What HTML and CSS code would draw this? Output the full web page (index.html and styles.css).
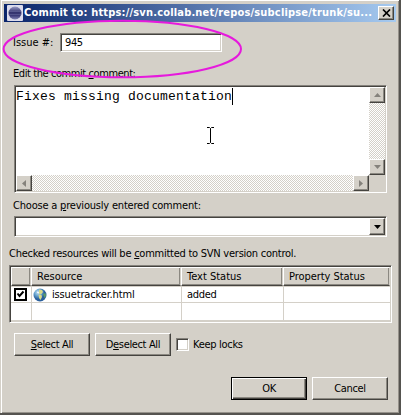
FILE: index.html
```html
<!DOCTYPE html>
<html lang="en">
<head>
<meta charset="utf-8">
<title>Commit</title>
<link rel="stylesheet" href="styles.css">
</head>
<body>
<main class="window">
  <header class="titlebar">
    <svg class="logo" width="16" height="16" viewBox="0 0 16 16"><defs><linearGradient id="orb" x2="0" y2="1"><stop stop-color="#9a9cc6"/><stop offset=".45" stop-color="#34336e"/><stop offset=".7" stop-color="#3c3b78"/><stop offset="1" stop-color="#8384b5"/></linearGradient></defs><rect width="16" height="16" rx="1" fill="#dcdcec"/><circle cx="8" cy="8" r="6.500" fill="url(#orb)"/><path d="M2 6.500h12M1.500 9.500h13" stroke="#6d6fa3" stroke-width=".5"/></svg>
    <h1 class="title">Commit to: https://svn.collab.net/repos/subclipse/trunk/su...</h1>
    <button class="close raised"><svg width="9" height="8" viewBox="0 0 9 8"><path d="M1 .5l7 7M8 .5l-7 7" stroke="#000" stroke-width="1.7"/></svg></button>
  </header>
  <div class="issue"><label class="t-issue">Issue #:</label><div class="field sunken">945</div></div>
  <div class="label t-edit">Edit the commit <u>c</u>omment:</div>
  <div class="editor sunken">
    <div class="text"><span class="typed">Fixes missing documentation</span><i class="caret"></i>
      <svg class="ibeam" width="9" height="17" viewBox="0 0 9 17"><path d="M1 .5h2.500l1 1 1-1H8M4.500 1.500v14M1 16.500h2.500l1-1 1 1H8" fill="none" stroke="#000"/></svg>
    </div>
    <div class="vbar track">
      <span class="sb raised"><svg width="7" height="4"><path d="M0 4L3.500 0L7 4z"/></svg></span>
      <span class="sb raised"><svg width="7" height="4"><path d="M0 0h7L3.500 4z"/></svg></span>
    </div>
    <div class="hbar track">
      <span class="sb raised"><svg width="4" height="7"><path d="M4 0v7L0 3.500z"/></svg></span>
      <span class="sb raised"><svg width="4" height="7"><path d="M0 0v7L4 3.500z"/></svg></span>
    </div>
    <div class="corner"></div>
  </div>
  <div class="label t-choose">Choose a <u>p</u>reviously entered comment:</div>
  <div class="combo sunken"><span class="sb raised dark"><svg width="7" height="4"><path d="M0 0h7L3.500 4z"/></svg></span></div>
  <div class="label t-checked">Checked resources will be <u>c</u>ommitted to SVN version control.</div>
  <div class="table sunken">
    <div class="row head"><span class="raised"></span><span class="raised t-res">Resource</span><span class="raised t-text">Text Status</span><span class="raised t-prop">Property Status</span></div>
    <div class="row first">
      <span class="check"><svg width="13" height="13" viewBox="0 0 13 13"><rect x="1" y="1" width="11" height="11" fill="#fff" stroke="#000" stroke-width="2"/><path d="M3.500 5.500l2 2.500 4-4.500" fill="none" stroke="#000" stroke-width="2"/></svg></span>
      <span class="file"><svg width="14" height="14" viewBox="0 0 14 14"><defs><radialGradient id="globe" cx=".35" cy=".3"><stop stop-color="#c6e4f5"/><stop offset=".6" stop-color="#5d9bc9"/><stop offset="1" stop-color="#2a5f9c"/></radialGradient></defs><circle cx="7" cy="7" r="6.500" fill="url(#globe)"/><path d="M6 1.500l3 .5 1 2-2 2.500-2-1zM5.500 6.500l3 .5.500 2-1.500 3-1.500-2z" fill="#d7d88a"/><path d="M10 6l2.500-1 .5 3-1.500 2z" fill="#5c9c68"/><path d="M4 4l2 1" stroke="#fff"/></svg><em class="t-file">issuetracker.html</em></span>
      <span class="t-added">added</span><span></span>
    </div>
    <div class="row last"><span></span><span></span><span></span><span></span></div>
  </div>
  <div class="actions">
    <button class="btn raised t-sel"><b><u>S</u>elect All</b></button>
    <button class="btn raised t-des"><b>D<u>e</u>select All</b></button>
    <i class="box sunken"></i><span class="t-keep">Keep locks</span>
  </div>
  <footer class="buttons">
    <button class="btn default"><b>OK</b></button>
    <button class="btn raised t-can"><b>Cancel</b></button>
  </footer>
  <svg class="ring" width="244" height="62" viewBox="0 0 244 62"><ellipse cx="122.300" cy="31" rx="118.700" ry="28.300" fill="none" stroke="#e619dd" stroke-width="2"/></svg>
</main>
</body>
</html>
```
FILE: styles.css
```css
* { box-sizing: border-box; }
body { margin: 0; background: #d4d0c8; overflow: hidden; }
.window {
  position: relative; width: 401px; height: 415px; padding: 4px 4px 0;
  background: #d4d0c8; color: #000;
  border: solid; border-width: 0 2px 2px 0; border-color: #55534f;
  box-shadow: inset 1px 0 #d4d0c8, inset 2px 1px #fff, inset -1px -1px #96928b;
  font: 11px/14px "DejaVu Sans Condensed", "DejaVu Sans", sans-serif;
  font-stretch: condensed;
}
svg { display: block; flex: none; }
u { text-decoration: underline; text-underline-offset: 1px; text-decoration-thickness: 1px; }
button { font: inherit; color: inherit; padding: 0; margin: 0; }
b { font-weight: 400; letter-spacing: -.35px; }
em { font-style: normal; }
.raised {
  background: #d4d0c8; border: 1px solid; border-color: #fff #45433f #45433f #fff;
  box-shadow: inset -1px -1px #8b8881;
}
.sunken {
  background: #fff; border: 1px solid; border-color: #85827c #fff #fff #85827c;
  box-shadow: inset 1px 1px #45433f, inset -1px -1px #d4d0c8;
}
.titlebar {
  display: flex; align-items: center; width: 392px; height: 18px; padding: 0 2px 0 3px;
  background: linear-gradient(90deg, #0a246a, #a6caf0);
}
.title {
  flex: 1; margin: 0 0 0 1px; color: #fff; white-space: nowrap;
  font-size: 11px; line-height: 18px; font-weight: 700; letter-spacing: .18px;
}
.close { display: flex; align-items: center; justify-content: center; width: 16px; height: 14px; }
.issue { display: flex; align-items: center; height: 19px; margin: 11px 0 0 9px; }
.issue label { width: 47px; padding-top: 1px; white-space: nowrap; }
.field { width: 162px; height: 19px; padding: 2px 4px; letter-spacing: -.4px; }
.label { margin-left: 9px; height: 14px; white-space: nowrap; letter-spacing: -.2px; }
.t-edit { margin-top: 15px; letter-spacing: -.42px; }
.editor {
  display: grid; grid-template: 88px 16px / 353px 16px; width: 373px; height: 108px;
  margin: 4px 0 0 10px; padding: 1px;
}
.text { position: relative; display: flex; padding: 1px 0 0; font: 13px/17px "Liberation Mono", monospace; white-space: nowrap; }
.typed { letter-spacing: .2px; }
.caret { width: 1px; height: 17px; background: #000; }
.ibeam { position: absolute; left: 190px; top: 40px; }
.track { display: flex; justify-content: space-between; background: repeating-conic-gradient(#d4d0c8 0 25%, #fff 0 50%) 0 0 / 2px 2px; }
.vbar { flex-direction: column; }
.sb { display: flex; align-items: center; justify-content: center; width: 16px; height: 16px; fill: #85827c; }
.dark { fill: #000; }
.corner { background: #d4d0c8; }
.t-choose { margin-top: 6px; }
.combo { display: flex; justify-content: flex-end; width: 373px; height: 21px; margin: 3px 0 0 10px; padding: 1px; }
.combo .sb { height: 17px; }
.t-checked { margin: 10px 0 0 5px; letter-spacing: -.25px; }
.table { width: 383px; height: 58px; margin: 4px 0 0 5px; padding: 1px; }
.row { display: grid; grid-template-columns: 20px 150px 102px 107px; border-bottom: 1px solid #d4d0c8; }
.row span { white-space: nowrap; line-height: 18px; padding-left: 5px; border-right: 1px solid #d4d0c8; }
.row span:not(.raised) { position: relative; left: 1px; }
.row span:not(.raised):last-child { border-right: 0; }
.head { height: 18px; border: 0; }
.row .raised { line-height: 17px; padding-left: 5px; }
.row.first { height: 18px; padding-top: 1px; background: linear-gradient(#fff 1px, #d4d0c8 1px 2px, #fff 2px); }
.row .check { padding: 2px 0 0 2px; }
.row .file { display: flex; align-items: center; padding-left: 1px; }
.file em { margin-left: 5px; letter-spacing: -.15px; }
.t-added { letter-spacing: -.3px; }
.t-prop { letter-spacing: -.05px; }
.t-keep { letter-spacing: -.3px; }
.row.last { height: 18px; }
.actions { display: flex; align-items: center; height: 23px; margin: 10px 0 0 10px; }
.btn { width: 76px; height: 23px; text-align: center; line-height: 20px; margin-right: 5px; white-space: nowrap; }
.box { width: 13px; height: 13px; margin-right: 4px; }
.buttons { display: flex; margin: 21px 0 0 227px; }
.default { background: #d4d0c8; border: 1px solid #000; box-shadow: inset 1px 1px #fff, inset -1px -1px #45433f, inset -2px -2px #8b8881; }
.ring { position: absolute; left: 0; top: 18px; }
```
